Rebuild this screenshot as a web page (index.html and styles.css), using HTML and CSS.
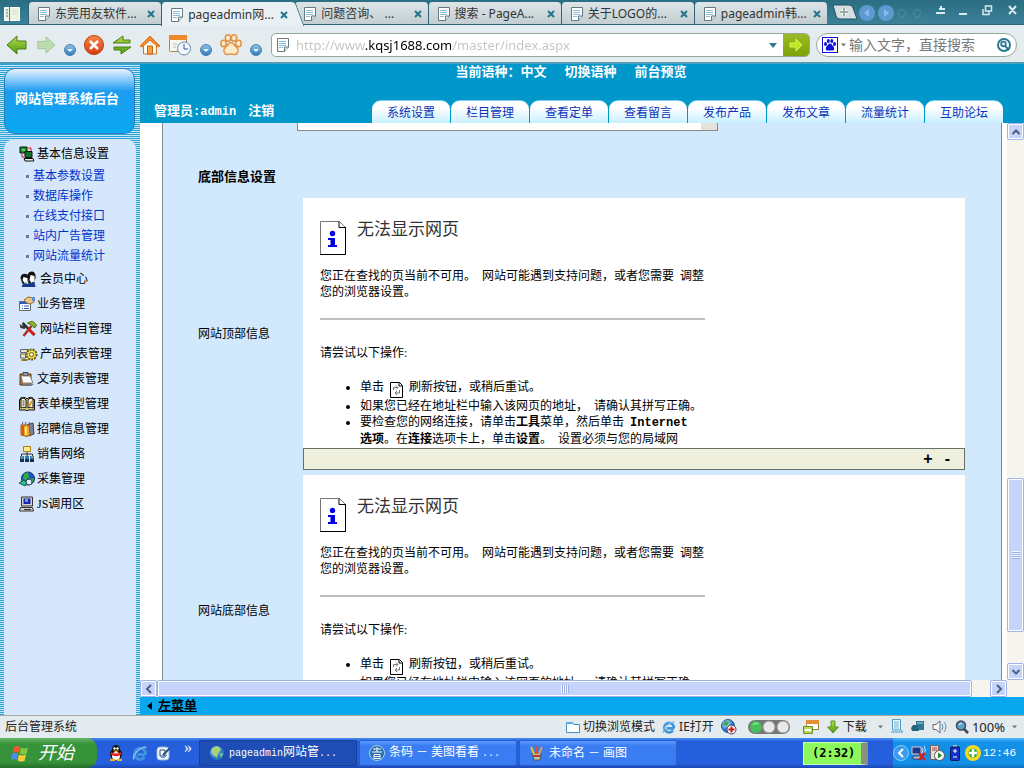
FILE: index.html
```html
<!DOCTYPE html>
<html lang="zh-CN">
<head>
<meta charset="utf-8">
<title>后台管理系统</title>
<link rel="stylesheet" href="styles.css">
</head>
<body>
<svg class="sprite" aria-hidden="true">
  <defs>
    <linearGradient id="leaf" x1="0" y1="0" x2="0" y2="1"><stop offset="0" stop-color="#b5dc4a"/><stop offset="1" stop-color="#4f9a14"/></linearGradient>
    <linearGradient id="ball" x1="0" y1="0" x2="0" y2="1"><stop offset="0" stop-color="#8fc3ea"/><stop offset="1" stop-color="#2f78b8"/></linearGradient>
    <linearGradient id="fire" x1="0" y1="0" x2="0" y2="1"><stop offset="0" stop-color="#f58a4c"/><stop offset="1" stop-color="#d83a0c"/></linearGradient>
    <radialGradient id="earth" cx=".35" cy=".3"><stop offset="0" stop-color="#dff2ff"/><stop offset="1" stop-color="#2478c4"/></radialGradient>
  </defs>
  <symbol id="page" viewBox="0 0 14 14"><path d="M1.500.5h11v8.500l-4 4.500h-7z" fill="#fff" stroke="#667780"/><path d="M3 3.500h7M3 5.500h7M3 7.500h7M3 9.500h4" stroke="#86bede"/><path d="M12.500 9h-4v4.500" fill="#dde5e8" stroke="#667780"/></symbol>
  <symbol id="close" viewBox="0 0 10 10"><path d="M2 2l6 6M8 2l-6 6" stroke="#25738c" stroke-width="2"/></symbol>
  <symbol id="left" viewBox="0 0 22 20"><path d="M1 10L11 1v5h9v8h-9v5z" fill="url(#leaf)" stroke="#467f17" stroke-linejoin="round"/></symbol>
  <symbol id="right" viewBox="0 0 22 20"><path d="M21 10L11 1v5H2v8h9v5z" fill="#bddcae" stroke="#9dc697" stroke-linejoin="round"/></symbol>
  <symbol id="dot" viewBox="0 0 12 12"><circle cx="6" cy="6" r="5.500" fill="url(#ball)" stroke="#4a83b0"/><path d="M3 5h6L6 8z" fill="#e9f6ff"/></symbol>
  <symbol id="stop" viewBox="0 0 20 20"><circle cx="10" cy="10" r="9.500" fill="url(#fire)" stroke="#b93c14"/><path d="M6 6l8 8M14 6l-8 8" stroke="#fff" stroke-width="2.500"/></symbol>
  <symbol id="swap" viewBox="0 0 20 20"><path d="M1 8L11 1v4h7v3zM19 12L9 19v-4H2v-3z" fill="url(#leaf)" stroke="#467f17" stroke-linejoin="round"/></symbol>
  <symbol id="home" viewBox="0 0 20 20"><path d="M3.500 9v10h13V9" fill="#fff8e9" stroke="#c87a2c"/><path d="M0 11L10 1l10 10-2 1-8-7-8 7z" fill="#f28b30" stroke="#d8701c"/><path d="M7.500 19v-8h5v8z" fill="#f5a040" stroke="#bd651d"/></symbol>
  <symbol id="history" viewBox="0 0 24 22"><rect x="1.500" y="1.500" width="17" height="16" rx="1" fill="#f7f7f2" stroke="#af8455"/><path d="M1 1h18v5H1z" fill="#ee8a2e"/><circle cx="16" cy="14.500" r="6.500" fill="#f3f8fd" stroke="#6d8aa0"/><path d="M16 10v5h4" fill="none" stroke="#3459a5"/><path d="M5 10h4M5 13h3" stroke="#bbb"/></symbol>
  <symbol id="paw" viewBox="0 0 22 22"><g fill="#fdeacb" stroke="#e09345" stroke-width="1.500"><ellipse cx="3.500" cy="9.500" rx="2.700" ry="3.200"/><ellipse cx="8" cy="4" rx="2.700" ry="3.200"/><ellipse cx="14" cy="4" rx="2.700" ry="3.200"/><ellipse cx="18.500" cy="9.500" rx="2.700" ry="3.200"/><path d="M11 8.500c-3 0-3 3-5.500 4.500-3 3-1 8 2 7.500 2-.5 5-.5 7 0 3 .5 5-4.500 2-7.500C14 11.500 14 8.500 11 8.500z"/></g></symbol>
  <symbol id="baidu" viewBox="0 0 16 16"><rect x=".5" y=".5" width="15" height="15" fill="#fff" stroke="#1111d8"/><g fill="#1111d8"><ellipse cx="3.500" cy="7" rx="1.500" ry="2"/><ellipse cx="6.300" cy="4" rx="1.500" ry="2"/><ellipse cx="9.800" cy="4" rx="1.500" ry="2"/><ellipse cx="12.500" cy="7" rx="1.500" ry="2"/><path d="M8 6.500c-2 0-2 2-3.500 3-1.500 2-.5 4.500 1.500 4h4c2 .5 3-2 1.500-4C10 8.500 10 6.500 8 6.500z"/></g></symbol>
  <symbol id="find" viewBox="0 0 14 14"><circle cx="7" cy="7" r="6" fill="none" stroke="#2c7893" stroke-width="2"/><circle cx="6.500" cy="6" r="2.300" fill="none" stroke="#2c7893" stroke-width="1.800"/><path d="M8 8l4 4" stroke="#2c7893" stroke-width="2"/></symbol>
  <symbol id="drop" viewBox="0 0 8 5"><path d="M0 0h8L4 5z" fill="currentColor"/></symbol>
  <symbol id="m-set" viewBox="0 0 16 16"><path d="M1 1h7v6H1z" fill="#1c8d2b" stroke="#111"/><path d="M3 3h3v2H3z" fill="#55e050"/><path d="M6 5.500h7v6H6z" fill="#14702a" stroke="#111"/><path d="M9 2h3v3M3 8v3h2" fill="none" stroke="#d31b1b"/><path d="M5 12.500h9l1 2.500H6z" fill="#e8e8dc" stroke="#111"/></symbol>
  <symbol id="m-user" viewBox="0 0 18 16"><path d="M8 3c4-5 9-2 8 4l-2 5-5 1z" fill="#111"/><path d="M11 4l4 1v5l-3 2-2-3z" fill="#fff"/><path d="M1 7c0-5 7-6 8-1l-1 5-5 2z" fill="#111"/><path d="M4 6l4 1v4l-3 1-2-3z" fill="#fff"/><path d="M2 16l2-4 5 1 6-2 1 5z" fill="#163a8b"/></symbol>
  <symbol id="m-biz" viewBox="0 0 16 16"><path d="M.5 5.500h11v9H.5z" fill="#fff" stroke="#6b6b6b"/><path d="M1 6h10v2H1z" fill="#2d5dbf"/><path d="M3 10h1M5 10h5M3 12.500h1M5 12.500h5" stroke="#2d5dbf"/><path d="M5 4l4-3 6 1v4l-4 2-3-1z" fill="#ecc580" stroke="#9a6e2d"/><path d="M13 1h3v4h-3z" fill="#5991d0"/></symbol>
  <symbol id="m-tool" viewBox="0 0 18 16"><path d="M3 2l12 12" stroke="#333" stroke-width="2.500"/><path d="M0 3l3 2 2-3 2 3-2 3-4-1z" fill="#333"/><path d="M9 8l6 6" stroke="#d32222" stroke-width="3"/><path d="M12 5L4 15" stroke="#b32d1d" stroke-width="2.500"/><path d="M8 2l5-2 4 4-2 3-3-3z" fill="#8fb62a" stroke="#4c6a16"/></symbol>
  <symbol id="m-prod" viewBox="0 0 18 16"><path d="M1 3.500h8v3H1zM1 8h5v4H1z" fill="#e9e7d0" stroke="#666"/><circle cx="12" cy="8.500" r="5" fill="#f2dd53" stroke="#6b5c0e" stroke-width="2" stroke-dasharray="2 1"/><circle cx="12" cy="8.500" r="2" fill="#fff" stroke="#6b5c0e"/><path d="M2 14h6" stroke="#8a7b22" stroke-width="2"/></symbol>
  <symbol id="m-doc" viewBox="0 0 16 16"><path d="M1 3h11v11H1z" fill="#b37338" stroke="#5e3815"/><path d="M4 1.500h5v3H4z" fill="#999" stroke="#444"/><path d="M2 5h9l3 7H4z" fill="#fff" stroke="#888"/><path d="M4 13h11l-3 2H3z" fill="#777"/></symbol>
  <symbol id="m-form" viewBox="0 0 16 16"><path d="M.5 3.500h1V2C4 1 6 1 8 3c2-2 4-2 6-1v1.500h1.500V14H9l-1 1-1-1H.5z" fill="#d9cf82" stroke="#111"/><path d="M2 3c2-1 4-1 5 1v8c-1-1-3-1-5 0zM14 3c-2-1-4-1-5 1v8c1-1 3-1 5 0z" fill="#fffce0" stroke="#111"/><path d="M3.500 5h2M3.500 7h2M3.500 9h2" stroke="#333"/><path d="M10 10l3-5" stroke="#d79c15" stroke-width="2"/></symbol>
  <symbol id="m-job" viewBox="0 0 16 16"><path d="M8 4l6-2 1 11-5 2z" fill="#7d829d" stroke="#444"/><path d="M2 4h8l1 10-3 1.500L2 14z" fill="#f4a921" stroke="#a35a0b"/><path d="M2 5h3v9H3z" fill="#d65717"/><path d="M3 4l1-3M6 4l1-3M9 4l2-3" stroke="#6d4a9a"/><path d="M6 6h2v8H6z" fill="#ffe175"/></symbol>
  <symbol id="m-net" viewBox="0 0 16 16"><path d="M4.500.5h7v5h-7z" fill="#ffea8a" stroke="#a9810e"/><path d="M8 6v2M2.500 10V8h11v2M8 8v2" fill="none" stroke="#333"/><path d="M1 10h4v3H1zM6 10h4v3H6zM11 10h4v3h-4z" fill="#2b7eb5"/><path d="M1 13h4v3H1zM6 13h4v3H6zM11 13h4v3h-4z" fill="#18324d"/><path d="M2 11h2M12 11h2" stroke="#f3a33a"/></symbol>
  <symbol id="m-globe" viewBox="0 0 16 16"><circle cx="9" cy="7.500" r="6.500" fill="#2353c4" stroke="#10296e"/><path d="M5 3l4-2 1 5-3 3-3-1zM11 7l4 1-2 4-2-1z" fill="#27b23d"/><path d="M0 12l5-3 3 3-2 3-4-2z" fill="#28c48b" stroke="#0b654a"/><circle cx="10" cy="11" r="3" fill="#dff1fb" stroke="#345"/></symbol>
  <symbol id="m-pc" viewBox="0 0 16 16"><path d="M2.500 1h11v9h-11z" fill="#d4d4cc" stroke="#333"/><path d="M4.500 2.500h7v5.500h-7z" fill="#1a22a8"/><path d="M6 3h3v3H6z" fill="#6b9bf2"/><path d="M1.500 11.500h12l1 3.500H.5z" fill="#d4d4cc" stroke="#333"/><path d="M5 13.500h7" stroke="#333"/></symbol>
  <symbol id="info" viewBox="0 0 26 34"><path d="M.5.500h19l6 6v27H.5z" fill="#fff" stroke="#777"/><path d="M25.500 6v27.500H0" fill="none" stroke="#000"/><path d="M19 .5v6h6.500" fill="none" stroke="#000"/><circle cx="12.500" cy="12.500" r="2.700" fill="#0000e6"/><path d="M8 17h7v7h2v2H8v-2h2.500v-5H8z" fill="#0000e6"/></symbol>
  <symbol id="refresh" viewBox="0 0 13 16"><path d="M.5.500h9l3 3v12H.5z" fill="#fff" stroke="#000"/><path d="M9 1v3h3" fill="none" stroke="#000"/><path d="M3.500 8V5.500h4M6 3.500l2 2-2 2M9.500 8v3h-4M7 9l-2 2 2 2" fill="none" stroke="#777"/></symbol>
  <symbol id="arr-u" viewBox="0 0 10 10"><path d="M1.500 7L5 3.500 8.500 7" fill="none" stroke="#4d6185" stroke-width="2"/></symbol>
  <symbol id="arr-d" viewBox="0 0 10 10"><path d="M1.500 3L5 6.500 8.500 3" fill="none" stroke="#4d6185" stroke-width="2"/></symbol>
  <symbol id="arr-l" viewBox="0 0 10 10"><path d="M7 1L3 5l4 4" fill="none" stroke="#4d6185" stroke-width="2"/></symbol>
  <symbol id="arr-r" viewBox="0 0 10 10"><path d="M3 1l4 4-4 4" fill="none" stroke="#4d6185" stroke-width="2"/></symbol>
  <symbol id="folder" viewBox="0 0 14 14"><path d="M.5 2.500h6l1 2h6v8H.5z" fill="#fff" stroke="#3d91c6"/><path d="M0 2h6v2H0z" fill="#5aaede"/></symbol>
  <symbol id="ie" viewBox="0 0 16 16"><path d="M13.800 9.500H5.500M13.500 9.500A5.500 5.500 0 1 0 12.500 12" fill="none" stroke="#3d93dc" stroke-width="3"/><path d="M2 14.500C-1 12 8 1 14.500 2.500" fill="none" stroke="#7cc0f0" stroke-width="1.500"/></symbol>
  <symbol id="medic" viewBox="0 0 16 16"><circle cx="7" cy="7" r="6.500" fill="url(#earth)" stroke="#1c5d9c"/><path d="M4 2l4 1-2 4-4-1z" fill="#39a84a"/><circle cx="10.500" cy="10.500" r="4.500" fill="#fff" stroke="#345"/><path d="M10.500 7.500v6M7.500 10.500h6" stroke="#d41414" stroke-width="2"/></symbol>
  <symbol id="lights" viewBox="0 0 42 14"><rect width="42" height="14" rx="7" fill="#777"/><circle cx="8" cy="7" r="6" fill="#47c05c"/><circle cx="21" cy="7" r="6" fill="#e8e8e8" stroke="#999"/><circle cx="35" cy="7" r="6" fill="#e8e8e8" stroke="#999"/><path d="M5 5q2-3 5-1" fill="none" stroke="#c8f5cb"/></symbol>
  <symbol id="block" viewBox="0 0 16 14"><path d="M3.500.5h12v9h-12z" fill="#fff" stroke="#a87838"/><path d="M3 0h13v4H3z" fill="#e09038"/><path d="M.5 6.500h9v7h-9z" fill="#b8d65c" stroke="#6f8e24"/><path d="M2 10h6" stroke="#fff" stroke-width="2"/></symbol>
  <symbol id="down" viewBox="0 0 12 14"><path d="M4 1h4v6h3.500L6 13 .5 7H4z" fill="url(#leaf)" stroke="#5b9223"/></symbol>
  <symbol id="sheet" viewBox="0 0 14 14"><path d="M2.500.500h8V11h-8zM1 13h12l-2-2" fill="#eef7fc" stroke="#4f9bc9"/><path d="M4 3h5M4 5h5M4 7h5M4 9h5" stroke="#71b3d8"/></symbol>
  <symbol id="hat" viewBox="0 0 14 12"><path d="M5 1h8v9H5z" fill="#2f7795"/><path d="M0 8l2-3h4l2 6H1z" fill="#24617c"/><path d="M6 2h6v2H6z" fill="#6aaac5"/></symbol>
  <symbol id="sound" viewBox="0 0 16 14"><path d="M1 4.500h3L8 1v12L4 9.500H1z" fill="#f4f8f9" stroke="#667"/><path d="M10 4q2 3 0 6M12 2q4 5 0 10" fill="none" stroke="#5492b4"/></symbol>
  <symbol id="lens" viewBox="0 0 14 14"><circle cx="6" cy="5.500" r="4.500" fill="#5ba1c8" stroke="#445" stroke-width="1.500"/><path d="M9 9l4 4" stroke="#445" stroke-width="2.500"/><path d="M4 5q1-2 3-1" fill="none" stroke="#fff"/></symbol>
  <symbol id="flag" viewBox="0 0 18 17"><path d="M3 2q3-2 6 0L7.500 8Q5 6 1.500 8z" fill="#ee5a2a"/><path d="M10 2.500q3 2 7 0L15.500 9Q12 10 8.500 8.500z" fill="#83c83c"/><path d="M1 9q3-2 6 0l-1.500 6Q3 13 0 15z" fill="#4e8df2"/><path d="M8 9.500q3 2 7 0L13.500 16Q10 17 6.500 15.500z" fill="#f9cf39"/></symbol>
  <symbol id="qq" viewBox="0 0 16 16"><ellipse cx="8" cy="9" rx="6" ry="6" fill="#111"/><ellipse cx="8" cy="4.500" rx="4" ry="4.500" fill="#111"/><ellipse cx="8" cy="11" rx="4" ry="4" fill="#fff"/><circle cx="6.500" cy="3.500" r="1.200" fill="#fff"/><circle cx="9.500" cy="3.500" r="1.200" fill="#fff"/><path d="M5 5.500h6L8 7.500z" fill="#f7b21c"/><path d="M3 7q5 3 10 0l.5 2.500Q8 13 2.500 9.500z" fill="#e02020"/><path d="M2 14h5v2H2zM9 14h5v2H9z" fill="#f7b21c"/></symbol>
  <symbol id="desk" viewBox="0 0 16 16"><rect x="1" y="2" width="12" height="13" rx="3" fill="#eef6ff" stroke="#9bb8dc"/><path d="M4 5h5v6H4z" fill="#fff" stroke="#347"/><path d="M7 10l7-7" stroke="#257" stroke-width="2"/><path d="M5 12q4 2 6-2" fill="none" stroke="#3a8bc8"/></symbol>
  <symbol id="world" viewBox="0 0 16 16"><circle cx="8" cy="8" r="7" fill="url(#earth)"/><path d="M3 4l5-3 4 3-3 4-1 5-4-3zM11 9l3-1-2 5z" fill="#a9d36c"/></symbol>
  <symbol id="kankan" viewBox="0 0 16 16"><circle cx="8" cy="8" r="7.500" fill="#2a6fa5" stroke="#a7d6ea"/><path d="M4 4h8M8 2v5M3 7h10M5 9.500h6v4H5zM5 11.500h6" fill="none" stroke="#fff"/></symbol>
  <symbol id="paint" viewBox="0 0 16 16"><path d="M3 8h9l-1 7H5z" fill="#b9c6a5" stroke="#555"/><path d="M5 9L2 2" stroke="#e5c43a" stroke-width="2"/><path d="M7 9l1-8" stroke="#d9502c" stroke-width="2"/><path d="M10 9l3-7" stroke="#d99e63" stroke-width="2"/><path d="M4 11h7" stroke="#c03838" stroke-width="2"/></symbol>
  <symbol id="lan" viewBox="0 0 16 16"><path d="M1 2h9v7H1z" fill="#20368c" stroke="#ccd"/><path d="M2 11h9v3H2z" fill="#bbc" stroke="#446"/><path d="M11 3q2 2 0 5M13 1q3 4 0 8" fill="none" stroke="#dde"/><path d="M8 8l6 7M14 8l-6 7" stroke="#e01818" stroke-width="2"/></symbol>
  <symbol id="srv" viewBox="0 0 16 16"><path d="M1.500.5h8v14h-8z" fill="#ddd" stroke="#666"/><path d="M3 3h5M3 5h5" stroke="#b33"/><circle cx="10.500" cy="10.500" r="5" fill="#fff" stroke="#555"/><path d="M9 7.500l4 3-4 3z" fill="#178b24"/></symbol>
  <symbol id="cell" viewBox="0 0 10 16"><path d="M3 0h4v2H3z" fill="#bbb"/><rect x=".5" y="2" width="9" height="13.500" rx="1" fill="#1432c8" stroke="#0a145e"/><path d="M5 4v4M3 6h4M3 12h4" stroke="#fff"/></symbol>
  <symbol id="plus" viewBox="0 0 16 16"><circle cx="8" cy="8" r="8" fill="#f5d824"/><circle cx="8" cy="8" r="4.500" fill="#2fa637"/><path d="M8 4v8M4 8h8" stroke="#fff" stroke-width="2.500"/></symbol>
</svg>

<div class="tabbar">
  <svg class="side-toggle" viewBox="0 0 16 14" aria-hidden="true"><path d="M.5.500h15v13H.5z" fill="#e9f3df" stroke="#fff"/><path d="M5 0h1v14H5z" fill="#387"/><path d="M2 3h2M2 6h2M2 9h2" stroke="#387"/><path d="M8 4h6M8 7h5" stroke="#cfe0c8"/></svg>
  <div class="tabs">
    <button class="tab"><svg class="i14"><use href="#page"/></svg><span>东莞用友软件...</span><svg class="i10"><use href="#close"/></svg></button>
    <button class="tab active"><svg class="i14"><use href="#page"/></svg><span>pageadmin网...</span><svg class="i10"><use href="#close"/></svg></button>
    <button class="tab"><svg class="i14"><use href="#page"/></svg><span>问题咨询、 ...</span><svg class="i10"><use href="#close"/></svg></button>
    <button class="tab"><svg class="i14"><use href="#page"/></svg><span>搜索 - PageA...</span><svg class="i10"><use href="#close"/></svg></button>
    <button class="tab"><svg class="i14"><use href="#page"/></svg><span>关于LOGO的...</span><svg class="i10"><use href="#close"/></svg></button>
    <button class="tab last"><svg class="i14"><use href="#page"/></svg><span>pageadmin韩...</span><svg class="i10"><use href="#close"/></svg></button>
  </div>
  <svg class="tab-extras" viewBox="0 0 92 20" aria-hidden="true"><path d="M1 1h16q3 0 4 3l4 11H8q-3 0-4-3z" fill="#d5dfe0" stroke="#1f5568"/><path d="M12 4v8M8 8h8" stroke="#fff" stroke-width="3"/><path d="M12 4v8M8 8h8" stroke="#a0aaa8" stroke-width="2"/><circle cx="35" cy="9" r="8" fill="#5c9bd0"/><circle cx="54" cy="9" r="8" fill="#5c9bd0"/><path d="M37 5v8l-5-4zM52 5v8l5-4z" fill="#89b9ee"/><g fill="none" stroke="#4b8ba0"><circle cx="70" cy="9" r="3.500"/><path d="M66 14h8"/><circle cx="85" cy="9" r="3.500"/><path d="M82 13h7"/></g></svg>
  <svg class="win-buttons" viewBox="0 0 84 16" aria-hidden="true"><g fill="none" stroke="#d8eaf0" stroke-width="2"><path d="M5 6h6M2 10h9M7 3v3M25 11h8M75 3l7 8M82 3l-7 8"/><path d="M51.500 3h6v5h-6zM49 6v5.500h6V8" stroke-width="1.500"/></g></svg>
</div>

<div class="toolbar">
  <button class="tool" aria-label="后退"><svg class="w22"><use href="#left"/></svg></button>
  <button class="tool" aria-label="前进"><svg class="w20"><use href="#right"/></svg></button>
  <button class="tool low" aria-label="历史列表"><svg class="w12"><use href="#dot"/></svg></button>
  <button class="tool" aria-label="停止"><svg class="w20"><use href="#stop"/></svg></button>
  <button class="tool" aria-label="刷新"><svg class="w20"><use href="#swap"/></svg></button>
  <button class="tool" aria-label="主页"><svg class="w20"><use href="#home"/></svg></button>
  <button class="tool" aria-label="历史记录"><svg class="w24"><use href="#history"/></svg></button>
  <button class="tool low" aria-label="更多历史"><svg class="w12"><use href="#dot"/></svg></button>
  <button class="tool" aria-label="收藏"><svg class="w22"><use href="#paw"/></svg></button>
  <button class="tool low" aria-label="更多收藏"><svg class="w12"><use href="#dot"/></svg></button>
  <form class="address">
    <svg class="i14"><use href="#page"/></svg>
    <input class="url" type="text" aria-label="地址" value="http://www.kqsj1688.com/master/index.aspx">
    <svg class="drop"><use href="#drop"/></svg>
    <button class="go" type="button" aria-label="转到"><svg class="i14" viewBox="0 0 14 14"><path d="M1 5h6V1l6 6-6 6V9H1z" fill="#bde81e" stroke="#d9f45a"/></svg></button>
  </form>
  <form class="search">
    <svg class="i16"><use href="#baidu"/></svg>
    <svg class="mini-drop"><use href="#drop"/></svg>
    <input type="text" aria-label="搜索" placeholder="输入文字，直接搜索">
    <svg class="i14"><use href="#find"/></svg>
  </form>
</div>

<div class="main">
  <aside class="sidebar">
    <div class="brand">网站管理系统后台</div>
    <nav class="menu">
      <a class="item" href="#"><svg class="i16"><use href="#m-set"/></svg>基本信息设置</a>
      <ul class="sub">
        <li><a href="#">基本参数设置</a></li>
        <li><a href="#">数据库操作</a></li>
        <li><a href="#">在线支付接口</a></li>
        <li><a href="#">站内广告管理</a></li>
        <li><a href="#">网站流量统计</a></li>
      </ul>
      <a class="item" href="#"><svg class="i16 wide"><use href="#m-user"/></svg>会员中心</a>
      <a class="item" href="#"><svg class="i16"><use href="#m-biz"/></svg>业务管理</a>
      <a class="item" href="#"><svg class="i16 wide"><use href="#m-tool"/></svg>网站栏目管理</a>
      <a class="item" href="#"><svg class="i16 wide"><use href="#m-prod"/></svg>产品列表管理</a>
      <a class="item" href="#"><svg class="i16"><use href="#m-doc"/></svg>文章列表管理</a>
      <a class="item" href="#"><svg class="i16"><use href="#m-form"/></svg>表单模型管理</a>
      <a class="item" href="#"><svg class="i16"><use href="#m-job"/></svg>招聘信息管理</a>
      <a class="item" href="#"><svg class="i16"><use href="#m-net"/></svg>销售网络</a>
      <a class="item" href="#"><svg class="i16"><use href="#m-globe"/></svg>采集管理</a>
      <a class="item" href="#"><svg class="i16"><use href="#m-pc"/></svg>JS调用区</a>
    </nav>
  </aside>

  <div class="workspace">
    <header class="header">
      <div class="lang"><span>当前语种：中文</span><a href="#">切换语种</a><a href="#">前台预览</a></div>
      <div class="header-row">
        <div class="account"><span>管理员<span class="mono">:admin</span></span><a href="#">注销</a></div>
        <nav class="nav">
          <a href="#">系统设置</a><a href="#">栏目管理</a><a href="#">查看定单</a><a href="#">查看留言</a><a href="#">发布产品</a><a href="#">发布文章</a><a href="#">流量统计</a><a href="#">互助论坛</a>
        </nav>
      </div>
    </header>

    <div class="viewport">
      <div class="page">
        <div class="panel">
          <div class="box-end"><span></span></div>
          <h2>底部信息设置</h2>
          <div class="field">
            <div class="label">网站顶部信息</div>
            <div class="editor">
              <div class="frame">
                <div class="error-title"><svg><use href="#info"/></svg><h3>无法显示网页</h3></div>
                <p>您正在查找的页当前不可用。&nbsp; 网站可能遇到支持问题，或者您需要&nbsp; 调整您的浏览器设置。</p>
                <hr>
                <p class="try">请尝试以下操作:</p>
                <ul>
                  <li class="first">单击&nbsp; <svg><use href="#refresh"/></svg>&nbsp; 刷新按钮，或稍后重试。</li>
                  <li>如果您已经在地址栏中输入该网页的地址，&nbsp; 请确认其拼写正确。</li>
                  <li>要检查您的网络连接，请单击<b>工具</b>菜单，然后单击&nbsp; <b class="mono">Internet</b><br><b>选项</b>。在<b>连接</b>选项卡上，单击<b>设置</b>。&nbsp; 设置必须与您的局域网</li>
                </ul>
              </div>
              <div class="resize"><button type="button">+</button><button type="button">-</button></div>
            </div>
          </div>
          <div class="field">
            <div class="label">网站底部信息</div>
            <div class="editor">
              <div class="frame tall">
                <div class="error-title"><svg><use href="#info"/></svg><h3>无法显示网页</h3></div>
                <p>您正在查找的页当前不可用。&nbsp; 网站可能遇到支持问题，或者您需要&nbsp; 调整您的浏览器设置。</p>
                <hr>
                <p class="try">请尝试以下操作:</p>
                <ul>
                  <li class="first">单击&nbsp; <svg><use href="#refresh"/></svg>&nbsp; 刷新按钮，或稍后重试。</li>
                  <li>如果您已经在地址栏中输入该网页的地址，&nbsp; 请确认其拼写正确。</li>
                </ul>
              </div>
            </div>
          </div>
        </div>
      </div>
      <div class="vbar"><span class="arrow"><svg class="i10"><use href="#arr-u"/></svg></span><span class="space-a"></span><span class="thumb"></span><span class="space-b"></span><span class="arrow"><svg class="i10"><use href="#arr-d"/></svg></span></div>
    </div>
    <div class="hbar"><span class="arrow"><svg class="i10"><use href="#arr-l"/></svg></span><span class="thumb"></span><span class="space"></span><span class="arrow"><svg class="i10"><use href="#arr-r"/></svg></span></div>
    <div class="footer"><svg viewBox="0 0 5 8"><path d="M5 0v8L0 4z"/></svg><a href="#">左菜单</a></div>
  </div>
</div>

<div class="status">
  <span class="status-text">后台管理系统</span>
  <button><svg class="i14"><use href="#folder"/></svg>切换浏览模式</button>
  <button><svg class="i14"><use href="#ie"/></svg>IE打开</button>
  <svg class="i16"><use href="#medic"/></svg>
  <svg class="lights"><use href="#lights"/></svg>
  <svg class="i16"><use href="#block"/></svg>
  <button><svg class="i14"><use href="#down"/></svg>下载<svg class="mini-drop far"><use href="#drop"/></svg></button>
  <div class="status-icons"><svg class="i14"><use href="#sheet"/></svg><svg class="i14"><use href="#hat"/></svg><svg class="i16"><use href="#sound"/></svg></div>
  <button class="zoom"><svg class="i14"><use href="#lens"/></svg>100%<svg class="mini-drop"><use href="#drop"/></svg></button>
</div>

<div class="taskbar">
  <button class="start"><svg><use href="#flag"/></svg>开始</button>
  <div class="quick"><svg class="i16"><use href="#qq"/></svg><svg class="i16"><use href="#ie"/></svg><svg class="i16"><use href="#desk"/></svg><span>»</span></div>
  <div class="tasks">
    <button class="task current"><svg class="i16"><use href="#world"/></svg><span><span class="task-latin">pageadmin</span>网站管<span class="task-latin">...</span></span></button>
    <button class="task"><svg class="i16"><use href="#kankan"/></svg><span>条码 － 美图看看 <span class="task-latin">...</span></span></button>
    <button class="task"><svg class="i16"><use href="#paint"/></svg><span>未命名 － 画图</span></button>
  </div>
  <div class="battery">(2:32)</div>
  <div class="tray">
    <svg class="i16" viewBox="0 0 16 16"><circle cx="8" cy="8" r="7.500" fill="#3a9bee" stroke="#86cdfc"/><path d="M10 4L6 8l4 4" fill="none" stroke="#fff" stroke-width="2"/></svg>
    <svg class="i16"><use href="#lan"/></svg><svg class="i16"><use href="#srv"/></svg><svg class="i16"><use href="#cell"/></svg><svg class="i16"><use href="#plus"/></svg>
    <time>12:46</time>
  </div>
</div>
</body>
</html>
```
FILE: styles.css
```css
* { box-sizing: border-box; }
body {
  margin: 0;
  height: 100vh;
  display: flex;
  flex-direction: column;
  overflow: hidden;
  font: 12px/16px "Liberation Serif", "Noto Sans CJK SC", sans-serif;
  color: #000;
}
button, input { font: inherit; color: inherit; border: 0; background: none; padding: 0; margin: 0; }
a { color: inherit; text-decoration: none; }
svg { display: block; flex: none; }
.sprite { position: absolute; width: 0; height: 0; }
.i10 { width: 10px; height: 10px; }
.i14 { width: 14px; height: 14px; }
.i16 { width: 16px; height: 16px; }
.mono { font-family: "Liberation Mono", monospace; font-size: 12px; }
.drop { width: 8px; height: 5px; color: #2c7893; }
.mini-drop { width: 5px; height: 4px; color: #777; }
.mini-drop.far { margin-left: 8px; }

/* browser tabs */
.tabbar {
  height: 25px;
  flex: none;
  display: flex;
  align-items: flex-end;
  background: linear-gradient(#2b6d83, #3b8298);
  border-bottom: 1px solid #2c6478;
  font-family: "Noto Sans", "Noto Sans CJK SC", sans-serif;
  color: #333;
}
.side-toggle { width: 16px; height: 14px; margin: 0 8px 3px 4px; }
.tabs { display: flex; width: 799px; height: 22px; }
.tab {
  flex: 1;
  min-width: 0;
  position: relative;
  display: flex;
  align-items: center;
  gap: 4px;
  padding: 2px 5px 0 8px;
  background: linear-gradient(#dde5e6, #c2ced2);
  border-left: 1px solid #2c6478;
  border-radius: 4px 4px 0 0;
}
.tab span { flex: 1; text-align: left; white-space: nowrap; }
.tab.active, .tab.active::after { background: #e8f0f3; }
.tab.active { z-index: 1; height: 24px; }
.tab.active::after, .tab.last::after {
  content: "";
  position: absolute;
  top: 0;
  bottom: 0;
  right: -6px;
  width: 12px;
  transform: skewX(20deg);
  border-right: 1px solid #2c6478;
  border-radius: 0 4px 0 0;
  z-index: -1;
}
.tab.last::after { background: linear-gradient(#dde5e6, #c2ced2); }
.tab-extras { width: 92px; height: 20px; margin: 0 auto 0 5px; }
.win-buttons { width: 84px; height: 16px; margin: 0 6px 5px 0; }

/* toolbar */
.toolbar {
  height: 39px;
  flex: none;
  display: flex;
  align-items: center;
  gap: 8px;
  padding: 3px 7px 0 6px;
  background: #e5ecf0;
  border-bottom: 2px solid #4d9db8;
}
.tool.low { align-self: flex-end; padding-bottom: 6px; }
.w12 { width: 12px; height: 12px; }
.w20 { width: 20px; height: 20px; }
.w22 { width: 22px; height: 22px; }
.w24 { width: 24px; height: 22px; }
.address, .search {
  height: 24px;
  display: flex;
  align-items: center;
  background: #fff;
  border: 1px solid #94a89a;
  font-family: "Noto Sans", "Noto Sans CJK SC", sans-serif;
}
.address { flex: 1; margin-left: 1px; padding-left: 4px; gap: 6px; border-radius: 5px; font-size: 13px; }
.url {
  flex: 1;
  min-width: 0;
  color: transparent;
  background: linear-gradient(90deg, #c4c4c4 69px, #000 69px, #000 155px, #c4c4c4 155px);
  -webkit-background-clip: text;
  background-clip: text;
}
.go {
  width: 26px;
  height: 22px;
  display: grid;
  place-items: center;
  background: linear-gradient(#9db928, #7da409);
  border-radius: 0 4px 4px 0;
}
.search { width: 201px; margin-left: -2px; padding: 0 5px; gap: 3px; border-radius: 12px; font-size: 14px; }
.search input { flex: 1; min-width: 0; }
.search input::placeholder { color: #777; opacity: 1; }

/* sidebar */
.main { flex: 1; min-height: 0; display: flex; }
.sidebar {
  width: 140px;
  flex: none;
  display: flex;
  flex-direction: column;
  padding: 4px 4px 0;
  gap: 5px;
  background: repeating-linear-gradient(#2ba3db 0 1px, #c5e4f5 1px 2px);
}
.brand {
  height: 66px;
  flex: none;
  margin-right: 1px;
  display: grid;
  place-items: center;
  padding-right: 5px;
  padding-bottom: 4px;
  border: 1px solid #2b7dba;
  border-radius: 11px;
  background: linear-gradient(#e8f4ff, #1c9cf0 35%, #08a9f0);
  color: #fff;
  font-size: 13px;
  font-weight: bold;
}
.menu { flex: 1; min-height: 0; overflow: hidden; padding: 2px 0 0 15px; background: #d6e7fc; border-radius: 10px 10px 0 0; }
.item { height: 25px; display: flex; align-items: center; gap: 2px; }
.wide { width: 19px; }
.sub { list-style: none; margin: 0; padding: 0 0 0 7px; color: #0033cc; }
.sub li { height: 20px; display: flex; align-items: center; gap: 4px; }
.sub li::before { content: ""; width: 3px; height: 3px; background: #6a7a96; }

/* header */
.workspace { flex: 1; min-width: 0; display: flex; flex-direction: column; }
.header {
  height: 59px;
  flex: none;
  display: flex;
  flex-direction: column;
  justify-content: space-between;
  background: #0097cb;
  color: #fff;
  font-size: 13px;
  font-weight: bold;
}
.lang { display: flex; justify-content: center; gap: 18px; padding-right: 22px; }
.header-row { display: flex; justify-content: space-between; align-items: flex-end; padding: 0 21px 0 14px; }
.account { display: flex; gap: 12px; padding-bottom: 3px; }
.nav { display: flex; gap: 1px; font-size: 12px; font-weight: normal; color: #0a32b8; }
.nav a {
  width: 78px;
  height: 23px;
  padding-top: 4px;
  text-align: center;
  background: linear-gradient(#fff 30%, #c9f0ff);
  border-radius: 9px 9px 0 0;
  border-top: 1px solid #7fd0f2;
}

/* scrolled page */
.viewport { flex: 1; min-height: 0; display: flex; overflow: hidden; }
.page { flex: 1; min-width: 0; padding: 0 5px 0 22px; overflow: hidden; }
.panel { background: #d1e8fd; border: solid #7d8a96; border-width: 0 1px; padding: 0 36px 0 35px; }
.box-end {
  width: 421px;
  height: 8px;
  margin-left: 99px;
  display: flex;
  justify-content: flex-end;
  background: #fff;
  border: 1px solid #8a8a8a;
  border-top: 0;
}
.box-end span { width: 16px; background: #e4e2da; }
.panel h2 { margin: 38px 0 13px; font-size: 13px; line-height: 16px; }
.field { display: flex; align-items: center; margin-bottom: 5px; }
.label { width: 105px; }
.editor { flex: 1; min-width: 0; }
.frame { height: 250px; overflow: hidden; background: #fff; padding: 23px 17px 0; }
.frame.tall { height: 272px; }
.error-title { display: flex; gap: 11px; }
.error-title svg { width: 26px; height: 34px; }
.error-title h3 { margin: 0; font-size: 17px; line-height: 18px; font-weight: normal; color: #333; }
.frame p { width: 388px; margin: 13px 0 18px; }
.frame hr { width: 385px; height: 2px; margin: 0; border: 0; background: #bfbfbf; }
.frame .try { margin: 25px 0 18px; }
.frame ul { margin: 0; padding-left: 40px; }
.frame li.first { height: 19px; }
.frame li svg { display: inline-block; width: 13px; height: 16px; vertical-align: top; margin-top: 3px; }
.resize {
  height: 22px;
  display: flex;
  justify-content: flex-end;
  gap: 12px;
  padding-right: 14px;
  background: #efefdd;
  border: 1px solid #667066;
  font: bold 16px/18px "Liberation Sans", sans-serif;
}

/* scroll bars */
.vbar { width: 17px; flex: none; display: flex; flex-direction: column; background: #f5f4ee; }
.hbar { height: 17px; flex: none; display: flex; padding-right: 17px; background: #f5f4ee; }
.arrow, .thumb {
  display: grid;
  place-items: center;
  border: 1px solid #9fb3e8;
  border-radius: 2px;
  background: #c6d4fb;
  box-shadow: inset 0 0 0 1px #fff;
}
.arrow { width: 17px; height: 17px; flex: none; }
.thumb::after { content: ""; width: 8px; height: 8px; background: repeating-linear-gradient(#f2f6ff 0 1px, #9fb2e6 1px 2px); }
.hbar .thumb::after { background: repeating-linear-gradient(90deg, #f2f6ff 0 1px, #9fb2e6 1px 2px); }
.vbar .space-a { flex: 339; }
.vbar .thumb { flex: 153; }
.vbar .space-b { flex: 31; }
.hbar .thumb { flex: 815; }
.hbar .space { flex: 18; }
.footer {
  height: 18px;
  flex: none;
  display: flex;
  align-items: center;
  gap: 6px;
  padding-left: 7px;
  background: #08a7ee;
  font-size: 13px;
  font-weight: bold;
}
.footer svg { width: 5px; height: 8px; }
.footer a { text-decoration: underline; }

/* status bar */
.status {
  height: 23px;
  flex: none;
  display: flex;
  align-items: center;
  gap: 7px;
  padding: 0 7px 0 5px;
  background: #e4ebee;
  border-top: 1px solid #a7a79c;
  font-family: "Noto Sans", "Noto Sans CJK SC", sans-serif;
  color: #222;
}
.status-text { margin-right: auto; }
.status button { display: flex; align-items: center; gap: 3px; white-space: nowrap; }
.lights { width: 42px; height: 14px; margin: 0 6px 0 4px; }
.status-icons { display: flex; gap: 7px; }
.status .zoom { font-size: 13px; }
.zoom .mini-drop { margin-left: 4px; }

/* task bar */
.taskbar {
  height: 30px;
  flex: none;
  display: flex;
  align-items: center;
  background: linear-gradient(#4a8df5, #245edb 12%, #2660de 85%, #1a48b4);
  color: #fff;
}
.start {
  width: 97px;
  height: 30px;
  display: flex;
  align-items: center;
  gap: 9px;
  padding-left: 11px;
  background: linear-gradient(#6ab567, #37933a 20%, #37933a 80%, #246f28);
  border-radius: 0 10px 10px 0;
  font-size: 18px;
  font-style: italic;
}
.start svg { width: 18px; height: 17px; }
.quick { width: 102px; display: flex; align-items: center; gap: 8px; padding-left: 11px; }
.quick span { padding: 0 0 10px 4px; font-size: 16px; }
.tasks { display: flex; gap: 2px; flex: 0 1 478px; min-width: 0; }
.task {
  flex: 1;
  min-width: 0;
  height: 26px;
  display: flex;
  align-items: center;
  gap: 4px;
  padding-left: 9px;
  border: 1px solid #2a5bd0;
  border-radius: 2px;
  background: linear-gradient(#5a9bff, #3a7cf2 20%, #3a7cf2);
  white-space: nowrap;
}
.task.current { background: #1d4db5; border-color: #173f98; }
.task-latin { font-family: "Liberation Mono", monospace; font-size: 10px; }
.battery {
  width: 65px;
  height: 23px;
  margin-left: auto;
  padding-left: 8px;
  background: #8cf85c;
  border: 1px solid #c8ffc0;
  border-right: 7px solid #8e8e80;
  color: #000;
  font: bold 12px/20px "DejaVu Sans Mono", monospace;
}
.tray {
  width: 131px;
  height: 30px;
  margin-left: 25px;
  display: flex;
  align-items: center;
  gap: 2px;
  background: linear-gradient(#4fb8f8, #1290e8 15%, #1290e8 85%, #0c6cba);
}
.tray time { font: 11px/16px "Liberation Mono", monospace; }
```
